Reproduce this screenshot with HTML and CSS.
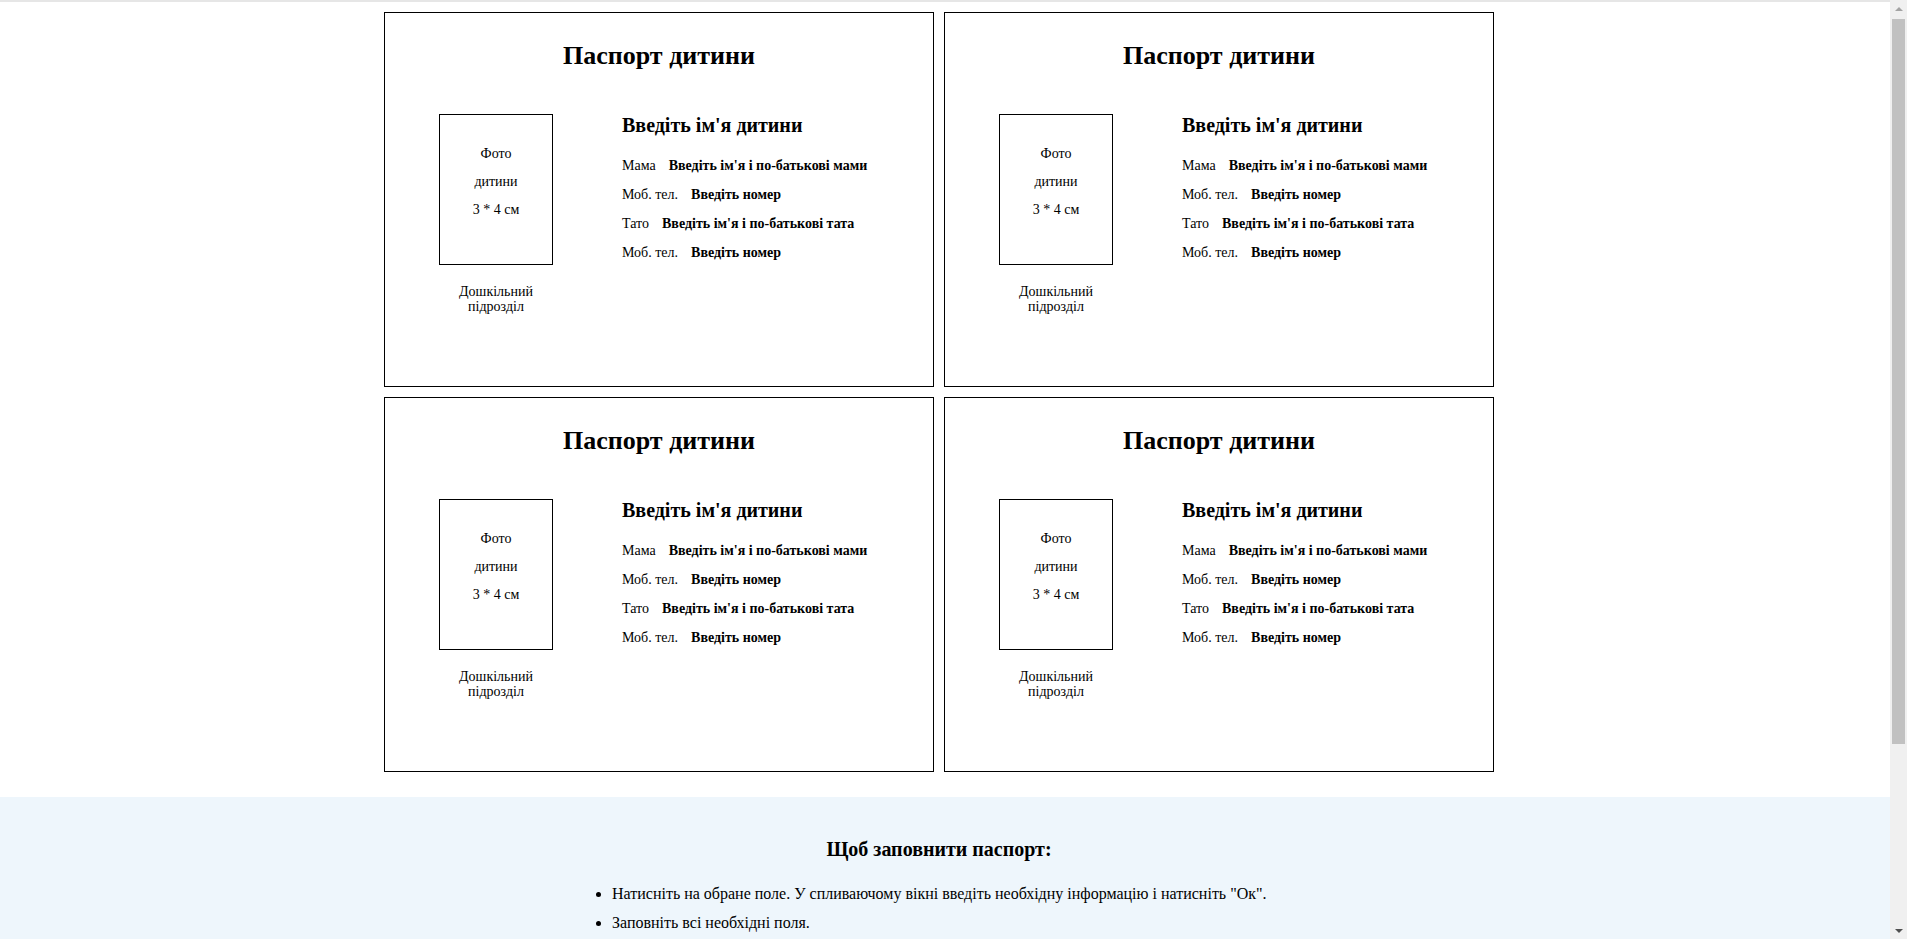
FILE: index.html
```html
<!DOCTYPE html>
<html lang="uk">
<head>
<meta charset="utf-8">
<title>Паспорт дитини</title>
<link rel="stylesheet" href="styles.css">
</head>
<body>
<div class="topline"></div>
<main class="page">
  <section class="cards">
    <article class="card">
      <h2 class="card-title">Паспорт дитини</h2>
      <div class="card-body">
        <div class="photo-col">
          <div class="photo">
            <div class="photo-line">Фото</div>
            <div class="photo-line">дитини</div>
            <div class="photo-line">3 * 4 см</div>
          </div>
          <div class="caption">Дошкільний<br>підрозділ</div>
        </div>
        <div class="info-col">
          <h3 class="child-name">Введіть ім'я дитини</h3>
          <div class="row"><span class="label">Мама</span><b class="value">Введіть ім'я і по-батькові мами</b></div>
          <div class="row"><span class="label">Моб. тел.</span><b class="value">Введіть номер</b></div>
          <div class="row"><span class="label">Тато</span><b class="value">Введіть ім'я і по-батькові тата</b></div>
          <div class="row"><span class="label">Моб. тел.</span><b class="value">Введіть номер</b></div>
        </div>
      </div>
    </article>
    <article class="card">
      <h2 class="card-title">Паспорт дитини</h2>
      <div class="card-body">
        <div class="photo-col">
          <div class="photo">
            <div class="photo-line">Фото</div>
            <div class="photo-line">дитини</div>
            <div class="photo-line">3 * 4 см</div>
          </div>
          <div class="caption">Дошкільний<br>підрозділ</div>
        </div>
        <div class="info-col">
          <h3 class="child-name">Введіть ім'я дитини</h3>
          <div class="row"><span class="label">Мама</span><b class="value">Введіть ім'я і по-батькові мами</b></div>
          <div class="row"><span class="label">Моб. тел.</span><b class="value">Введіть номер</b></div>
          <div class="row"><span class="label">Тато</span><b class="value">Введіть ім'я і по-батькові тата</b></div>
          <div class="row"><span class="label">Моб. тел.</span><b class="value">Введіть номер</b></div>
        </div>
      </div>
    </article>
    <article class="card">
      <h2 class="card-title">Паспорт дитини</h2>
      <div class="card-body">
        <div class="photo-col">
          <div class="photo">
            <div class="photo-line">Фото</div>
            <div class="photo-line">дитини</div>
            <div class="photo-line">3 * 4 см</div>
          </div>
          <div class="caption">Дошкільний<br>підрозділ</div>
        </div>
        <div class="info-col">
          <h3 class="child-name">Введіть ім'я дитини</h3>
          <div class="row"><span class="label">Мама</span><b class="value">Введіть ім'я і по-батькові мами</b></div>
          <div class="row"><span class="label">Моб. тел.</span><b class="value">Введіть номер</b></div>
          <div class="row"><span class="label">Тато</span><b class="value">Введіть ім'я і по-батькові тата</b></div>
          <div class="row"><span class="label">Моб. тел.</span><b class="value">Введіть номер</b></div>
        </div>
      </div>
    </article>
    <article class="card">
      <h2 class="card-title">Паспорт дитини</h2>
      <div class="card-body">
        <div class="photo-col">
          <div class="photo">
            <div class="photo-line">Фото</div>
            <div class="photo-line">дитини</div>
            <div class="photo-line">3 * 4 см</div>
          </div>
          <div class="caption">Дошкільний<br>підрозділ</div>
        </div>
        <div class="info-col">
          <h3 class="child-name">Введіть ім'я дитини</h3>
          <div class="row"><span class="label">Мама</span><b class="value">Введіть ім'я і по-батькові мами</b></div>
          <div class="row"><span class="label">Моб. тел.</span><b class="value">Введіть номер</b></div>
          <div class="row"><span class="label">Тато</span><b class="value">Введіть ім'я і по-батькові тата</b></div>
          <div class="row"><span class="label">Моб. тел.</span><b class="value">Введіть номер</b></div>
        </div>
      </div>
    </article>
  </section>
</main>
<section class="help">
  <div class="help-inner">
    <h3 class="help-title">Щоб заповнити паспорт:</h3>
    <ul class="help-list">
      <li>Натисніть на обране поле. У спливаючому вікні введіть необхідну інформацію і натисніть "Ок".</li>
      <li>Заповніть всі необхідні поля.</li>
    </ul>
  </div>
</section>
<div class="scrollbar" aria-hidden="true">
  <div class="sb-arrow sb-up"></div>
  <div class="sb-track"><div class="sb-thumb"></div></div>
  <div class="sb-arrow sb-down"></div>
</div>
</body>
</html>
```
FILE: styles.css
```css
html, body {
  margin: 0;
  padding: 0;
}
body {
  font-family: "Liberation Serif", "Times New Roman", serif;
  color: #000;
  background: #fff;
}
.topline {
  height: 2px;
  background: #e6e6e6;
}
.page {
  padding: 10px 29px 0 0;
}
.cards {
  display: grid;
  grid-template-columns: 550px 550px;
  column-gap: 10px;
  row-gap: 10px;
  justify-content: center;
}
.card {
  box-sizing: border-box;
  height: 375px;
  border: 1px solid #000;
  padding: 28px 0 0 54px;
}
.card-title {
  margin: 0 0 0 -54px;
  font-size: 26px;
  font-weight: bold;
  text-align: center;
}
.card-body {
  display: flex;
  margin-top: 43px;
}
.photo-col {
  width: 114px;
  flex: none;
  text-align: center;
  font-size: 14px;
}
.photo {
  box-sizing: border-box;
  width: 114px;
  height: 151px;
  border: 1px solid #000;
  padding-top: 25px;
}
.photo-line {
  line-height: 28px;
}
.caption {
  margin-top: 19px;
  line-height: 15px;
}
.info-col {
  margin-left: 69px;
  font-size: 14px;
}
.child-name {
  margin: 0 0 14px;
  font-size: 20px;
  line-height: 23px;
  font-weight: bold;
}
.row {
  line-height: 29px;
  white-space: nowrap;
}
.label {
  margin-right: 13px;
}
.value {
  font-weight: bold;
}
.help {
  margin-top: 25px;
  background: #eef6fc;
  min-height: 375px;
}
.help-inner {
  padding: 41px 29px 0 0;
}
.help-title {
  margin: 0;
  font-size: 20px;
  line-height: 23px;
  font-weight: bold;
  text-align: center;
}
.help-list {
  width: 1110px;
  box-sizing: border-box;
  margin: 18px auto 0;
  padding-left: 228px;
  font-size: 16px;
}
.help-list li {
  line-height: 29px;
}

/* browser scrollbar drawn over the page edge */
.scrollbar {
  position: fixed;
  top: 0;
  right: 0;
  width: 17px;
  height: 100vh;
  background: #f0f0f0;
  display: flex;
  flex-direction: column;
}
.sb-arrow {
  height: 17px;
  flex: none;
  display: flex;
  align-items: center;
  justify-content: center;
}
.sb-arrow::before {
  content: "";
  width: 0;
  height: 0;
  border-left: 4px solid transparent;
  border-right: 4px solid transparent;
}
.sb-up::before {
  border-bottom: 4px solid #a3a3a3;
}
.sb-down::before {
  border-top: 4px solid #505050;
}
.sb-track {
  flex: 1;
  padding: 2px 2px 0;
}
.sb-thumb {
  height: 725px;
  background: #c1c1c1;
}
```
